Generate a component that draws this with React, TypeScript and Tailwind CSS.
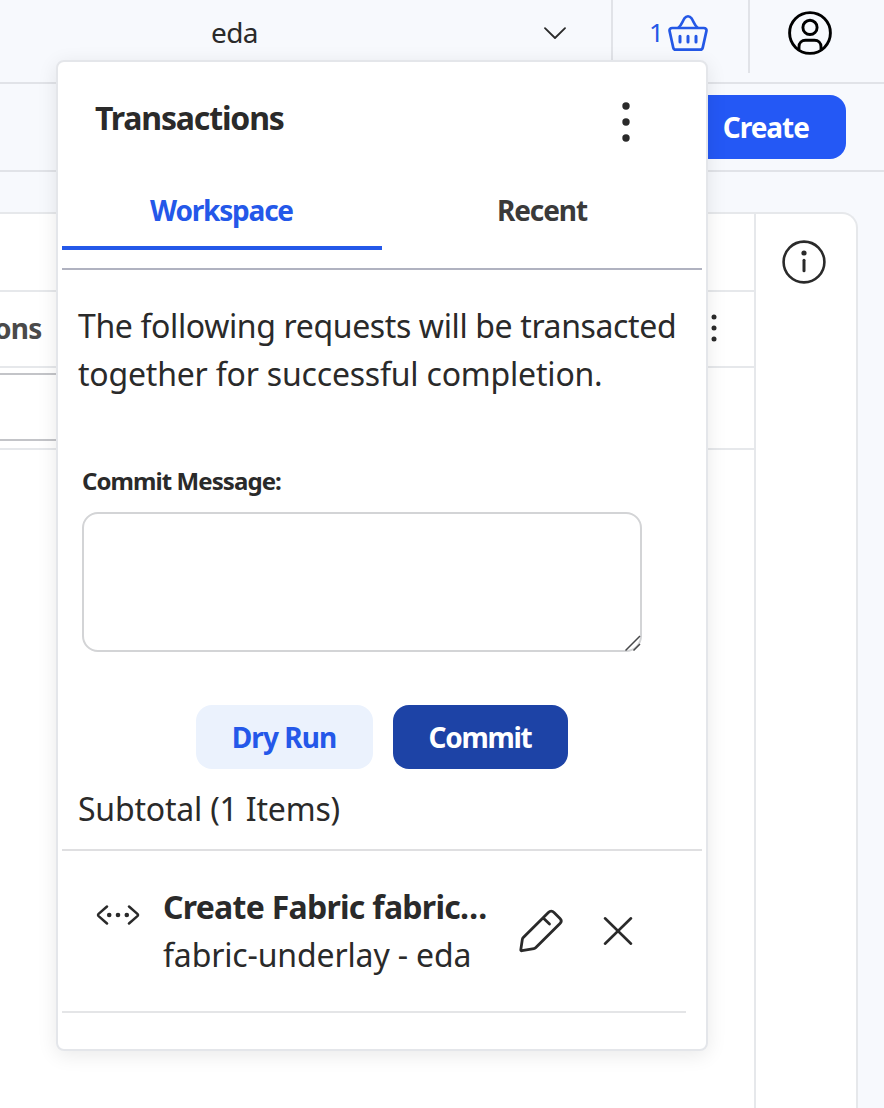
import type { ReactNode } from 'react';

function Icon({ box, className, children }: { box: string; className: string; children: ReactNode }) {
  return (
    <svg viewBox={box} className={`block shrink-0 ${className}`} fill="none" stroke="currentColor" strokeLinecap="round" strokeLinejoin="round">
      {children}
    </svg>
  );
}

function TopBar() {
  return (
    <header className="flex h-[84px] shrink-0 border-b-2 border-[#e1e3e8]">
      <div className="flex h-[72px] w-[613px] items-center border-r-2 border-[#e1e3e8] pr-[45px] pl-[211px]">
        <span className="-mt-[8px] flex-1 text-[28px] leading-[40px] tracking-[-0.6px]">eda</span>
        <Icon box="0 0 22 12" className="-mt-[6px] h-[12px] w-[22px]">
          <path d="M1 1.200 11 11l10-9.800" strokeWidth="1.800" />
        </Icon>
      </div>
      <div className="flex h-[73px] w-[137px] items-start border-r-2 border-[#e1e3e8] pt-[14px] pl-[36px] text-[#2458e6]">
        <span className="w-[19px] text-[26px] leading-[37px]">1</span>
        <Icon box="0 0 40 38" className="h-[38px] w-[40px]">
          <path d="M4.200 14h31.600c1.900 0 3 1.300 2.600 3.100l-3.600 16.300c-.3 1.500-1.100 2.300-2.600 2.300H7.800c-1.500 0-2.300-.8-2.600-2.300L1.600 17.100C1.200 15.300 2.300 14 4.200 14Z" strokeWidth="2.700" />
          <path d="M10.500 13.500c3-1.800 3.600-5.600 6-9.200 1.900-2.800 5.100-2.800 7 0 2.400 3.600 3 7.400 6 9.200" strokeWidth="2.600" />
          <path d="M12 22.300v5.800M20 22.300v5.800M28 22.300v5.800" strokeWidth="3" />
        </Icon>
      </div>
      <div className="flex flex-1 pt-[11px] pl-[38px] text-black">
        <Icon box="0 0 44 44" className="h-[44px] w-[44px]">
          <circle cx="22" cy="22" r="20.400" strokeWidth="2.900" />
          <circle cx="22" cy="16.400" r="7.100" strokeWidth="2.900" />
          <path d="M11 38.500v-2.700c0-3.900 2.800-6.500 6.500-6.500h9c3.700 0 6.500 2.600 6.500 6.500v2.700" strokeWidth="2.900" strokeLinecap="butt" />
        </Icon>
      </div>
    </header>
  );
}

function Toolbar() {
  return (
    <div className="flex h-[88px] shrink-0 items-start justify-end border-b-2 border-[#e1e3e8] pt-[11px] pr-[38px]">
      <button className="h-16 w-[159px] rounded-2xl bg-[#2458f5] pr-[37px] text-right text-[28px] font-bold leading-[64px] tracking-[-1px] text-white">
        Create
      </button>
    </div>
  );
}

function TablePanel() {
  return (
    <main className="mt-10 mr-[26px] flex flex-1 rounded-tr-2xl border-t-2 border-r-2 border-[#e6e8eb] bg-white">
      <div className="w-[756px] border-r-2 border-[#e6e8eb]">
        <div className="h-[78px] border-b-2 border-[#e6e8eb]" />
        <div className="flex h-[76px] items-center justify-between border-b-2 border-[#e6e8eb] pr-[37px]">
          <span className="-mt-[3px] -ml-[6px] text-[28px] font-bold leading-[40px] tracking-[-0.7px] text-[#4a4a4a]">ons</span>
          <Icon box="0 0 6 28" className="-mt-[2px] h-[28px] w-[6px]">
            <g fill="currentColor" stroke="none">
              <circle cx="3" cy="3" r="2.500" />
              <circle cx="3" cy="14" r="2.500" />
              <circle cx="3" cy="25" r="2.500" />
            </g>
          </Icon>
        </div>
        <div className="h-[82px] border-b-2 border-[#e6e8eb] pt-[5px]">
          <div className="h-[68px] w-[300px] border-y-2 border-[#c3c4c8]" />
        </div>
      </div>
      <div className="flex-1 pt-[26px] pl-[26px]">
        <Icon box="0 0 44 44" className="h-[44px] w-[44px]">
          <circle cx="22" cy="22" r="20.400" strokeWidth="2.600" />
          <path d="M22 20.300v10.400" strokeWidth="3" />
          <circle cx="22" cy="13" r="2.600" fill="currentColor" stroke="none" />
        </Icon>
      </div>
    </main>
  );
}

function TransactionsPopup() {
  return (
    <section className="absolute top-[60px] left-[56px] flex h-[991px] w-[652px] flex-col rounded-lg border-2 border-[#e4e6ea] bg-white px-1 shadow-[0_4px_20px_rgba(0,0,0,0.09)]">
      <div className="flex h-[118px] items-start justify-between pr-[72px] pl-[33px]">
        <h2 className="mt-[35px] text-[32px] font-bold leading-[42px] tracking-[-1.15px]">Transactions</h2>
        <Icon box="0 0 8 40" className="mt-[40px] h-[40px] w-[8px]">
          <g fill="currentColor" stroke="none">
            <circle cx="4" cy="4" r="3.700" />
            <circle cx="4" cy="20" r="3.700" />
            <circle cx="4" cy="36" r="3.700" />
          </g>
        </Icon>
      </div>
      <div className="grid h-[90px] shrink-0 grid-cols-2 items-start border-b-2 border-[#b0b2c0] text-center text-[28px] font-bold leading-[40px]">
        <div className="h-[70px] border-b-4 border-[#2458e9] pt-[10px] pr-px tracking-[-1.2px] text-[#2458e9]">Workspace</div>
        <div className="pt-[10px] tracking-[-1.1px] text-[#3a3a3a]">Recent</div>
      </div>
      <div className="mt-[32px] pl-4 text-[32px] leading-[48px] whitespace-nowrap">
        <p className="tracking-[-0.37px]">The following requests will be transacted</p>
        <p className="tracking-[-0.2px]">together for successful completion.</p>
      </div>
      <label className="mt-[67px] pl-5 text-[24px] font-bold leading-[32px] tracking-[-0.92px]">Commit Message:</label>
      <div className="relative mt-[15px] ml-5 h-[140px] w-[560px]">
        <textarea aria-label="Commit Message" className="block h-full w-full resize-none rounded-2xl border-2 border-[#d3d4d6] bg-white p-3 outline-none" />
        <svg viewBox="0 0 16 16" className="absolute right-px bottom-px h-4 w-4" stroke="#47484a" strokeWidth="1.500">
          <path d="M.5 15.500 15 1M8.500 15.500 15 9" />
        </svg>
      </div>
      <div className="mt-[53px] flex gap-5 pl-[134px] text-[28px] font-bold leading-[64px]">
        <button className="h-16 w-[177px] rounded-2xl bg-[#ebf2fd] pr-px tracking-[-0.95px] text-[#2458e9]">Dry Run</button>
        <button className="h-16 w-[175px] rounded-2xl bg-[#1d43a6] pr-px tracking-[-1.3px] text-white">Commit</button>
      </div>
      <div className="h-[82px] shrink-0 border-b-2 border-[#dfdfe1] pt-[16px] pl-4 text-[32px] leading-[48px] tracking-[-0.2px]">
        Subtotal (1 Items)
      </div>
      <div className="mr-4 flex h-[162px] shrink-0 border-b-2 border-[#e4e5e7] pl-[34px]">
        <Icon box="0 0 44 20" className="mt-[54px] h-[20px] w-[44px]">
          <path d="M11 1.500 2.600 8.900q-1.100 1.100 0 2.200L11 18.500M33 1.500l8.400 7.400q1.100 1.100 0 2.200L33 18.500" strokeWidth="2.500" />
          <g fill="currentColor" stroke="none">
            <circle cx="13.200" cy="10" r="2.300" />
            <circle cx="22" cy="10" r="2.300" />
            <circle cx="30.800" cy="10" r="2.300" />
          </g>
        </Icon>
        <div className="mt-[32px] w-[378px] pl-[23px] text-[32px] leading-[48px] whitespace-nowrap">
          <div className="font-bold tracking-[-0.73px]">Create Fabric fabric…</div>
          <div className="tracking-[-0.15px]">fabric-underlay - eda</div>
        </div>
        <Icon box="0 0 48 48" className="mt-[57px] h-[48px] w-[48px]">
          <path d="M5.300 29.600 30.400 4.400c1.700-1.700 3.900-1.700 5.600 0l6 6c1.500 1.500 1.500 3.500 0 5L17.600 39.800c-.5.500-1 .8-1.700.9L4 42.700c-.9.200-1.300-.2-1.200-1.100l1.500-10c.1-.8.400-1.400 1-2ZM25 9.800l6.500 6.200" strokeWidth="2.800" />
        </Icon>
        <Icon box="0 0 30 30" className="mt-[65px] ml-[37px] h-[30px] w-[30px]">
          <path d="m2 2.300 26 25.400M28 2.300 2 27.700" strokeWidth="2.600" />
        </Icon>
      </div>
    </section>
  );
}

export default function App() {
  return (
    <div className="relative flex h-[1108px] w-[884px] flex-col overflow-hidden bg-[#f7f9fd] font-['Noto_Sans',sans-serif] text-[#2a2a2a]">
      <TopBar />
      <Toolbar />
      <TablePanel />
      <TransactionsPopup />
    </div>
  );
}
